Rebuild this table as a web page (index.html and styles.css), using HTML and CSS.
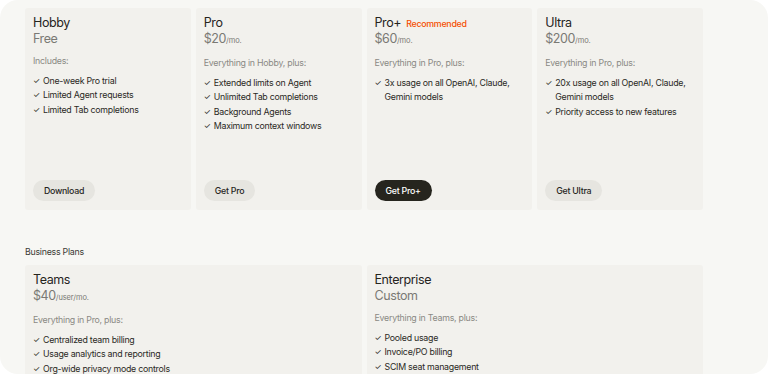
FILE: index.html
```html
<!doctype html>
<html lang="en">
  <head>
    <meta charset="UTF-8" />
    <meta name="viewport" content="width=device-width, initial-scale=1.0" />
    <title>Pricing</title>
    <link rel="stylesheet" href="styles.css">
  </head>
  <body>
    <div class="frame">
      <div class="plans">
        <div class="card">
          <h3 class="plan-name">Hobby</h3>
          <div class="price">Free</div>
          <p class="includes">Includes:</p>
          <ul class="features">
            <li>One-week Pro trial</li>
            <li>Limited Agent requests</li>
            <li>Limited Tab completions</li>
          </ul>
          <button class="btn">Download</button>
        </div>
        <div class="card">
          <h3 class="plan-name">Pro</h3>
          <div class="price">$20<span class="per">/mo.</span></div>
          <p class="includes">Everything in Hobby, plus:</p>
          <ul class="features">
            <li>Extended limits on Agent</li>
            <li>Unlimited Tab completions</li>
            <li>Background Agents</li>
            <li>Maximum context windows</li>
          </ul>
          <button class="btn">Get Pro</button>
        </div>
        <div class="card">
          <h3 class="plan-name">Pro+ <span class="badge">Recommended</span></h3>
          <div class="price">$60<span class="per">/mo.</span></div>
          <p class="includes">Everything in Pro, plus:</p>
          <ul class="features">
            <li>3x usage on all OpenAI, Claude, Gemini models</li>
          </ul>
          <button class="btn btn-dark">Get Pro+</button>
        </div>
        <div class="card">
          <h3 class="plan-name">Ultra</h3>
          <div class="price">$200<span class="per">/mo.</span></div>
          <p class="includes">Everything in Pro, plus:</p>
          <ul class="features">
            <li>20x usage on all OpenAI, Claude, Gemini models</li>
            <li>Priority access to new features</li>
          </ul>
          <button class="btn">Get Ultra</button>
        </div>
      </div>

      <h4 class="section-label">Business Plans</h4>
      <div class="plans business">
        <div class="card">
          <h3 class="plan-name">Teams</h3>
          <div class="price">$40<span class="per">/user/mo.</span></div>
          <p class="includes">Everything in Pro, plus:</p>
          <ul class="features">
            <li>Centralized team billing</li>
            <li>Usage analytics and reporting</li>
            <li>Org-wide privacy mode controls</li>
          </ul>
        </div>
        <div class="card">
          <h3 class="plan-name">Enterprise</h3>
          <div class="price">Custom</div>
          <p class="includes">Everything in Teams, plus:</p>
          <ul class="features">
            <li>Pooled usage</li>
            <li>Invoice/PO billing</li>
            <li>SCIM seat management</li>
          </ul>
        </div>
      </div>
    </div>
  </body>
</html>
```

FILE: styles.css
```css
html,
body {
  margin: 0;
  background: #ffffff;
  overflow: hidden;
}
body {
  font-family: Inter, "Liberation Sans", sans-serif;
  color: #26251e;
}
.frame {
  height: 374px;
  box-sizing: border-box;
  padding: 8px 25px 0;
  background: #f7f7f4;
  border-radius: 18px;
  overflow: hidden;
}
.plans {
  width: 678px;
  display: grid;
  grid-template-columns: repeat(4, 1fr);
  gap: 5px;
}
.plans.business {
  grid-template-columns: repeat(2, 1fr);
}
.card {
  background: #f2f1ed;
  border-radius: 3px;
  padding: 7px 8px 9px;
  height: 202px;
  box-sizing: border-box;
  display: flex;
  flex-direction: column;
}
.business .card {
  height: 160px;
}
.plan-name {
  margin: 0;
  font-size: 12.5px;
  font-weight: 400;
  letter-spacing: -0.4px;
  line-height: 16px;
  height: 16px;
  display: flex;
  align-items: baseline;
  gap: 5px;
}
.badge {
  color: #f54e00;
  font-size: 8.8px;
  font-weight: 500;
  letter-spacing: -0.25px;
  line-height: 12px;
}
.price {
  font-size: 12.5px;
  letter-spacing: -0.4px;
  line-height: 16px;
  color: #7a7974;
}
.per {
  font-size: 7.5px;
  letter-spacing: -0.1px;
}
.includes {
  margin: 8px 0 0;
  font-size: 8.8px;
  letter-spacing: -0.25px;
  line-height: 12px;
  color: #8a8984;
}
.features {
  list-style: none;
  margin: 7px 0 0;
  padding: 0;
}
.features li {
  position: relative;
  padding-left: 10px;
  font-size: 8.8px;
  letter-spacing: -0.25px;
  line-height: 14.4px;
  color: #2a2924;
}
.features li::before {
  content: "✓";
  position: absolute;
  left: 0;
  font-size: 8px;
}
.btn {
  margin-top: auto;
  align-self: flex-start;
  height: 21px;
  padding: 0 11px;
  border: none;
  border-radius: 11px;
  background: #e6e5e0;
  color: #26251e;
  font-family: inherit;
  font-size: 8.8px;
  letter-spacing: -0.25px;
  font-weight: 500;
}
.btn-dark {
  background: #26251e;
  color: #ffffff;
}
.section-label {
  margin: 36px 0 7px;
  font-size: 8.8px;
  letter-spacing: -0.25px;
  font-weight: 400;
  line-height: 12px;
  color: #3b3a35;
}
```
